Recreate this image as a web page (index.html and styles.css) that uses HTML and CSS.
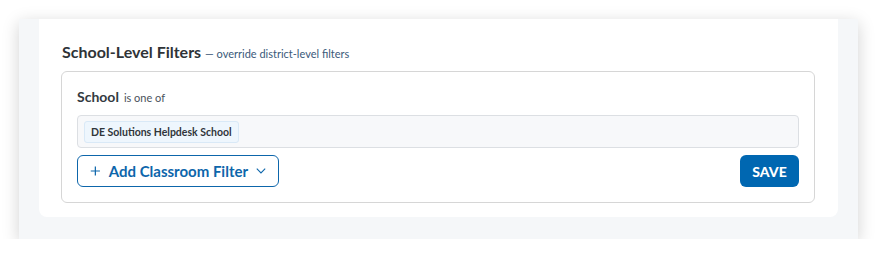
FILE: index.html
```
<!DOCTYPE html>
<html lang="en">

<head>
    <meta charset="UTF-8">
    <meta name="viewport" content="width=device-width, initial-scale=1.0">
    <title>School-Level Filters</title>

    <link rel="stylesheet" href="styles.css">
</head>

<body>

    <div class="panel">
        <div class="card">
            <h2 class="title">School-Level Filters <span class="subtitle">&mdash; override district-level filters</span></h2>

            <div class="filter-box">
                <div class="filter-label">
                    <span class="field">School</span>
                    <span class="op">is one of</span>
                </div>

                <div class="select-input">
                    <span class="chip">DE Solutions Helpdesk School</span>
                </div>

                <div class="actions">
                    <button class="add-btn">
                        <svg width="14" height="14" viewBox="0 0 14 14">
                            <path d="M7 1v12M1 7h12" stroke="currentColor" stroke-width="1.6" fill="none" />
                        </svg>
                        <span>Add Classroom Filter</span>
                        <svg width="13" height="8" viewBox="0 0 13 8">
                            <path d="M1 1l5.5 5.5L12 1" stroke="currentColor" stroke-width="1.4" fill="none" />
                        </svg>
                    </button>
                    <button class="save-btn">Save</button>
                </div>
            </div>
        </div>
    </div>

</body>

</html>
```

FILE: styles.css
```
body {
    font-family: Lato, 'Open Sans', Arial, sans-serif;
    background-color: #ffffff;
    margin: 0;
    padding: 0;
}

.panel {
    width: 839px;
    margin: 19px 0 0 19px;
    padding: 0 20px 22px 20px;
    box-sizing: border-box;
    background-color: #f5f7f9;
    box-shadow: 0 4px 16px rgba(0, 0, 0, 0.18);
}

.card {
    background-color: #ffffff;
    border-radius: 0 0 8px 8px;
    padding: 23px 23px 14px 22px;
}

.title {
    margin: 0 0 7px 1px;
    font-size: 16px;
    font-weight: bold;
    color: #2f3337;
    line-height: 20px;
}

.subtitle {
    font-size: 11px;
    font-weight: normal;
    color: #3b5a7a;
}

.filter-box {
    border: 1px solid #d6d6d6;
    border-radius: 6px;
    padding: 16px 15px 15px 15px;
}

.filter-label {
    display: flex;
    align-items: baseline;
    gap: 5px;
    height: 18px;
    line-height: 18px;
    margin-bottom: 9px;
}

.field {
    font-size: 14px;
    font-weight: bold;
    color: #333a40;
}

.op {
    font-size: 11px;
    color: #4a525c;
}

.select-input {
    height: 33px;
    box-sizing: border-box;
    background-color: #f7f8fa;
    border: 1px solid #dcdfe3;
    border-radius: 4px;
    padding: 5px 6px;
    display: flex;
    align-items: center;
}

.chip {
    display: inline-block;
    height: 22px;
    line-height: 20px;
    box-sizing: border-box;
    padding: 0 6px;
    background-color: #eef6fd;
    border: 1px solid #d9e9f7;
    border-radius: 3px;
    font-size: 10.5px;
    font-weight: bold;
    color: #30353a;
}

.actions {
    display: flex;
    justify-content: space-between;
    margin-top: 7px;
}

button {
    font-family: inherit;
    cursor: pointer;
}

.add-btn {
    height: 32px;
    width: 202px;
    display: flex;
    align-items: center;
    gap: 8px;
    padding: 0 12px;
    background-color: #ffffff;
    border: 1px solid #0d66ab;
    border-radius: 6px;
    color: #0d66ab;
    font-size: 15px;
    font-weight: bold;
    white-space: nowrap;
}

.save-btn {
    height: 32px;
    width: 59px;
    padding: 0;
    background-color: #0067b1;
    border: none;
    border-radius: 6px;
    color: #ffffff;
    font-size: 14px;
    font-weight: 900;
    text-transform: uppercase;
}
```
